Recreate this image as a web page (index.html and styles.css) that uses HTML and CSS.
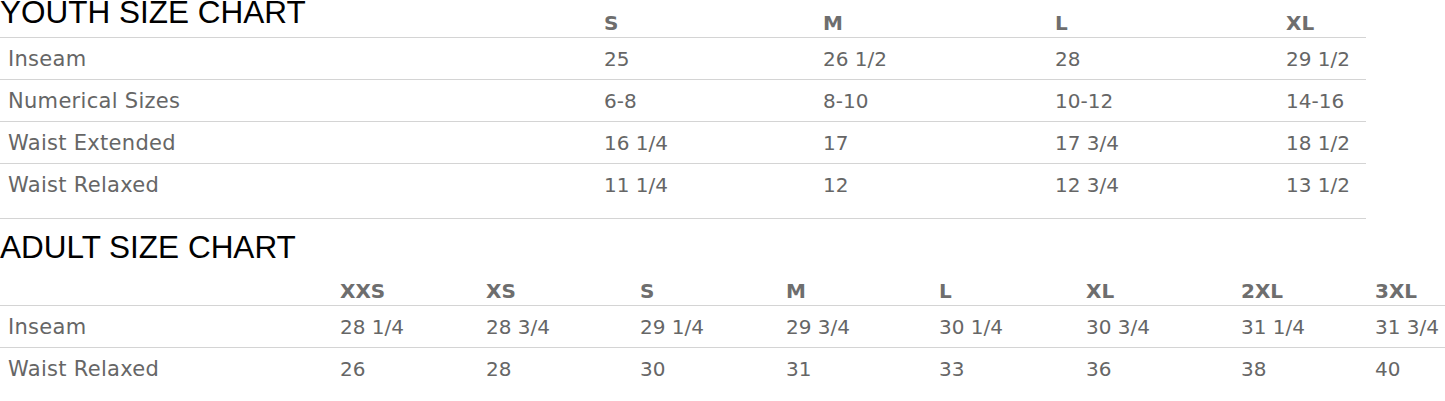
FILE: index.html
```html
<!DOCTYPE html>
<html lang="en">
<head>
<meta charset="utf-8">
<title>Size Chart</title>
<link rel="stylesheet" href="styles.css">
</head>
<body>
<section class="chart chart-youth">
  <table class="size-table">
    <colgroup>
      <col style="width:596px"><col style="width:219px"><col style="width:232px"><col style="width:231px"><col style="width:88px">
    </colgroup>
    <thead>
      <tr>
        <th class="title-cell"><h2 class="chart-title">YOUTH SIZE CHART</h2></th>
        <th>S</th><th>M</th><th>L</th><th>XL</th>
      </tr>
    </thead>
    <tbody>
      <tr><td>Inseam</td><td>25</td><td>26 1/2</td><td>28</td><td>29 1/2</td></tr>
      <tr><td>Numerical Sizes</td><td>6-8</td><td>8-10</td><td>10-12</td><td>14-16</td></tr>
      <tr><td>Waist Extended</td><td>16 1/4</td><td>17</td><td>17 3/4</td><td>18 1/2</td></tr>
      <tr class="last"><td>Waist Relaxed</td><td>11 1/4</td><td>12</td><td>12 3/4</td><td>13 1/2</td></tr>
    </tbody>
  </table>
</section>

<section class="chart chart-adult">
  <h2 class="chart-title adult-title">ADULT SIZE CHART</h2>
  <table class="size-table adult-table">
    <colgroup>
      <col style="width:332px"><col style="width:146px"><col style="width:154px"><col style="width:146px"><col style="width:153px"><col style="width:147px"><col style="width:155px"><col style="width:134px"><col style="width:78px">
    </colgroup>
    <thead>
      <tr>
        <th></th><th>XXS</th><th>XS</th><th>S</th><th>M</th><th>L</th><th>XL</th><th>2XL</th><th>3XL</th>
      </tr>
    </thead>
    <tbody>
      <tr><td>Inseam</td><td>28 1/4</td><td>28 3/4</td><td>29 1/4</td><td>29 3/4</td><td>30 1/4</td><td>30 3/4</td><td>31 1/4</td><td>31 3/4</td></tr>
      <tr class="last"><td>Waist Relaxed</td><td>26</td><td>28</td><td>30</td><td>31</td><td>33</td><td>36</td><td>38</td><td>40</td></tr>
    </tbody>
  </table>
</section>
</body>
</html>
```

FILE: styles.css
```css
* { box-sizing: border-box; }

html, body {
  margin: 0;
  padding: 0;
  background: #ffffff;
}

body {
  font-family: "DejaVu Sans", "Noto Sans", sans-serif;
  color: #666666;
  overflow: hidden;
}

.chart-youth {
  width: 1366px;
  padding-bottom: 12px;
  border-bottom: 1px solid #d4d4d4;
}

.chart-title {
  margin: 0;
  font-family: "Liberation Sans", Arial, sans-serif;
  font-weight: 400;
  font-size: 31.5px;
  line-height: 24px;
  color: #000000;
  white-space: nowrap;
}

.adult-title {
  margin-top: 16px;
}

.size-table {
  table-layout: fixed;
  border-collapse: separate;
  border-spacing: 0;
  width: 1366px;
}

.adult-table {
  width: 1445px;
}

.size-table th,
.size-table td {
  padding: 0 8px;
  text-align: left;
  font-size: 20px;
  line-height: 24px;
  white-space: nowrap;
  border-bottom: 1px solid #d4d4d4;
}

.size-table th {
  height: 38px;
  vertical-align: bottom;
  padding-bottom: 2px;
  font-weight: 700;
  color: #6e6e6e;
}

.adult-table th {
  height: 47px;
}

.size-table th.title-cell {
  padding: 0;
  vertical-align: top;
}

.size-table td {
  height: 42px;
  vertical-align: middle;
  font-weight: 400;
  color: #666666;
}

.size-table td:first-child {
  font-size: 21px;
  letter-spacing: 0.3px;
}

.size-table tr.last td {
  border-bottom: none;
  height: 42px;
}
```
